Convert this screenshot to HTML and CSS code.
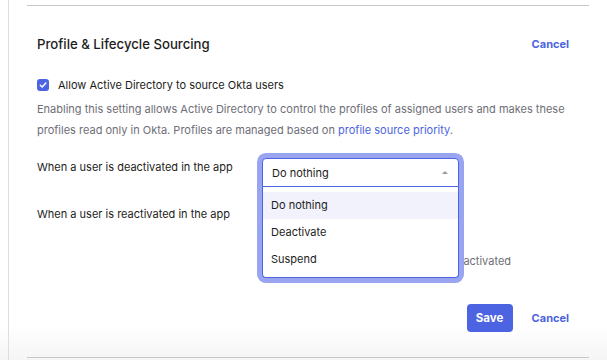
FILE: index.html
```html
<!DOCTYPE html>
<html lang="en">
<head>
    <meta charset="UTF-8">
    <meta name="viewport" content="width=device-width, initial-scale=1.0">
    <title>Profile &amp; Lifecycle Sourcing</title>
    <link rel="stylesheet" href="styles.css">
</head>
<body>
    <div class="frame">
        <section class="panel">
            <div class="panel-head">
                <h3>Profile &amp; Lifecycle Sourcing</h3>
                <a href="#" class="link-btn">Cancel</a>
            </div>

            <label class="check">
                <span class="box">
                    <svg width="8" height="8" viewBox="0 0 8 8"><path d="M1.3 4.2 3.2 6 6.8 2" fill="none" stroke="#fff" stroke-width="1.5" stroke-linecap="round" stroke-linejoin="round"/></svg>
                </span>
                Allow Active Directory to source Okta users
            </label>
            <p class="help">Enabling this setting allows Active Directory to control the profiles of assigned users and makes these profiles read only in Okta. Profiles are managed based on <a href="#">profile source priority</a>.</p>

            <div class="row">
                <div class="row-label">When a user is deactivated in the app</div>
                <div class="combo">
                    <div class="select open">Do nothing<span class="caret up"></span></div>
                    <ul class="menu">
                        <li class="active">Do nothing</li>
                        <li>Deactivate</li>
                        <li>Suspend</li>
                    </ul>
                </div>
            </div>

            <div class="row">
                <div class="row-label">When a user is reactivated in the app</div>
                <div class="field">
                    <div class="select">Do nothing<span class="caret"></span></div>
                    <p class="note">Reactivate users who were formerly deactivated</p>
                </div>
            </div>

            <div class="actions">
                <button class="btn-save">Save</button>
                <a href="#" class="link-btn">Cancel</a>
            </div>
        </section>
    </div>
</body>
</html>
```

FILE: styles.css
```css
body {
    margin: 0;
    font-family: Inter, "Noto Sans", sans-serif;
    font-size: 11px;
    color: #1d1d21;
    background: linear-gradient(to bottom, #fff 325px, #f5f5f5 360px);
    min-height: 360px;
}
.frame {
    margin-left: 8px;
    border-left: 1px solid #dedede;
    min-height: 360px;
    padding-top: 5px;
    box-sizing: border-box;
}
.panel {
    margin: 0 18px;
    border-top: 1px solid #c8c8c8;
    border-bottom: 1px solid #c8c8c8;
    padding: 0 20px 25px 10px;
}
.panel-head {
    display: flex;
    justify-content: space-between;
    align-items: center;
    padding-top: 28px;
    margin-bottom: 23px;
    line-height: 20px;
}
.panel-head h3 {
    margin: 0;
    font-size: 13.2px;
    font-weight: 500;
}
.link-btn {
    color: #4c64e1;
    font-weight: 700;
    text-decoration: none;
    font-size: 11px;
}
.check {
    display: flex;
    align-items: center;
    gap: 9px;
    line-height: 16px;
}
.box {
    width: 12px;
    height: 12px;
    border-radius: 3px;
    background: #4c64e1;
    display: flex;
    align-items: center;
    justify-content: center;
}
.help {
    margin: 6px 0 0;
    color: #6e6e78;
    line-height: 21px;
}
.help a {
    color: #4c64e1;
    text-decoration: none;
}
.row {
    display: flex;
    margin-top: 17px;
}
.row + .row {
    margin-top: 18px;
}
.row-label {
    width: 225px;
    line-height: 18px;
}
.combo, .field {
    position: relative;
    width: 197px;
}
.combo {
    z-index: 2;
}
.select {
    height: 29px;
    box-sizing: border-box;
    border: 1px solid #c8c8d0;
    border-radius: 4px;
    padding: 0 10px 0 9px;
    display: flex;
    align-items: center;
    justify-content: space-between;
    background: #fff;
}
.select.open {
    border-color: #4c64e1;
    border-radius: 4px 4px 0 0;
    box-shadow: 0 0 0 5px #99a5f0;
    clip-path: inset(-6px -6px 0 -6px round 8px 8px 0 0);
}
.caret {
    border-left: 3px solid transparent;
    border-right: 3px solid transparent;
    border-top: 3px solid #999;
}
.caret.up {
    border-top: none;
    border-bottom: 3px solid #999;
}
.menu {
    position: absolute;
    top: 29px;
    left: 0;
    right: 0;
    margin: 0;
    padding: 5px 0 4px;
    list-style: none;
    background: #fff;
    border: 1px solid #4c64e1;
    border-top: none;
    border-radius: 0 0 4px 4px;
    box-shadow: 0 0 0 5px #99a5f0;
    clip-path: inset(0 -6px -6px -6px round 0 0 8px 8px);
}
.menu li {
    height: 27px;
    line-height: 27px;
    padding-left: 8px;
}
.menu li.active {
    background: #f1f2fc;
}
.note {
    margin: 18px 0 0 -2px;
    line-height: 18px;
    color: #6e6e78;
    white-space: nowrap;
}
.actions {
    display: flex;
    justify-content: flex-end;
    align-items: center;
    gap: 19px;
    margin-top: 34px;
}
.btn-save {
    background: #4c64e1;
    color: #fff;
    border: none;
    border-radius: 4px;
    height: 28px;
    width: 46px;
    padding: 0;
    font-family: inherit;
    font-size: 11.5px;
    font-weight: 700;
}
```
